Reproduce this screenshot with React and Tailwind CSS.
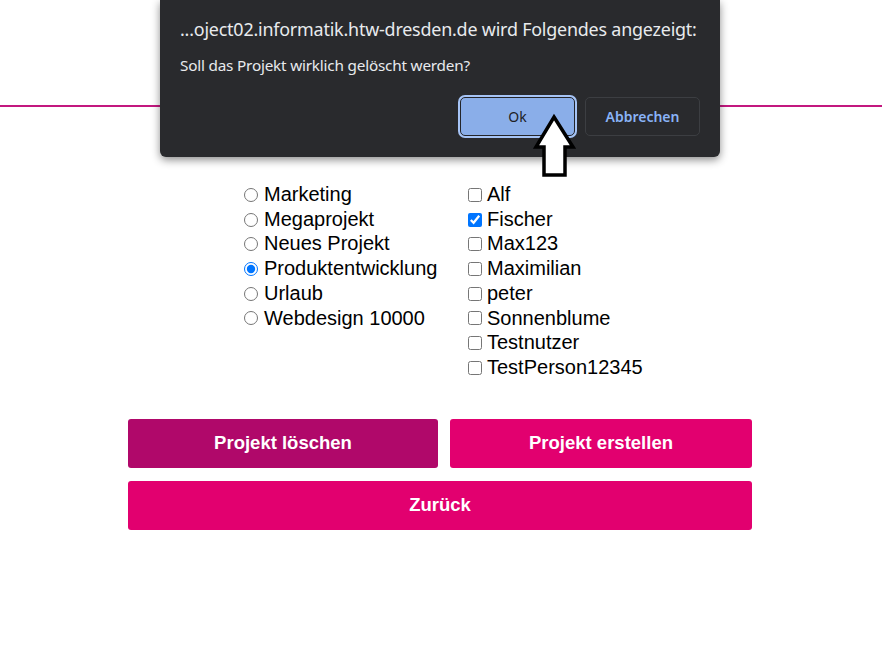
import { useState } from "react";

const projects = ["Marketing", "Megaprojekt", "Neues Projekt", "Produktentwicklung", "Urlaub", "Webdesign 10000"];
const users = ["Alf", "Fischer", "Max123", "Maximilian", "peter", "Sonnenblume", "Testnutzer", "TestPerson12345"];

function ConfirmDialog() {
  return (
    <div className="absolute left-[160px] top-0 w-[560px] h-[157px] bg-[#292a2d] rounded-b-[6px] shadow-[0_3px_8px_rgba(0,0,0,0.45)] px-5 font-['Noto_Sans',sans-serif]">
      <div className="pt-[15px] text-[17.9px] leading-[28px] text-[#e8eaed] tracking-[-0.2px]">
        ...oject02.informatik.htw-dresden.de wird Folgendes angezeigt:
      </div>
      <div className="mt-[12px] text-[15.3px] leading-[20px] text-[#e8eaed] tracking-[-0.2px]">
        Soll das Projekt wirklich gelöscht werden?
      </div>
      <div className="mt-[22px] flex justify-end gap-[10px]">
        <button className="w-[115px] h-[39px] rounded-[5px] bg-[#8aaee9] border border-[#23252a] ring-2 ring-[#a6c4f6] text-[14px] text-[#202124]">
          Ok
        </button>
        <button className="w-[115px] h-[39px] rounded-[5px] border border-[#3c3e42] text-[14px] font-semibold text-[#8ab4f8]">
          Abbrechen
        </button>
      </div>
    </div>
  );
}

function Arrow() {
  return (
    <svg className="absolute left-[532px] top-[113px]" width="46" height="66" viewBox="0 0 46 66">
      <polygon points="22,4 41,34 33,34 33,62 12,62 12,34 4,34" fill="white" stroke="black" strokeWidth="3.5" strokeLinejoin="miter" />
    </svg>
  );
}

export default function App() {
  const [project, setProject] = useState("Produktentwicklung");
  const [members, setMembers] = useState(["Fischer"]);

  const toggle = (u) =>
    setMembers(members.includes(u) ? members.filter((m) => m !== u) : [...members, u]);

  return (
    <div className="relative w-[882px] h-[647px] bg-white overflow-hidden font-['Liberation_Sans',Arial,sans-serif] text-black">
      {/* HEADER */}
      <div className="h-[107px] border-b-2 border-[#c3187f]" />

      <div className="w-[624px] mx-auto -translate-x-[1px]">
        <div className="pl-[117px] pt-[25px] text-[22px] font-bold leading-[26px]">Projekt bearbeiten</div>

        {/* LISTS */}
        <div className="pl-[116px] pt-[24px] flex text-[20px] leading-[24.7px]">
          <div className="w-[224px]">
            {projects.map((p) => (
              <label key={p} className="flex items-center gap-[6px]">
                <input
                  type="radio" name="project" checked={project === p}
                  onChange={() => setProject(p)}
                  className="w-[14px] h-[14px] m-0 mt-[1px]"
                />
                <span>{p}</span>
              </label>
            ))}
          </div>
          <div>
            {users.map((u) => (
              <label key={u} className="flex items-center gap-[5px]">
                <input
                  type="checkbox" checked={members.includes(u)}
                  onChange={() => toggle(u)}
                  className="w-[14px] h-[14px] m-0 mt-[1px]"
                />
                <span>{u}</span>
              </label>
            ))}
          </div>
        </div>

        {/* ACTIONS */}
        <div className="mt-[39px] flex flex-col gap-[13px]">
          <div className="flex gap-[12px]">
            <button className="w-[310px] h-[49px] rounded-[3px] bg-[#b0086a] text-white text-[18.5px] font-bold">
              Projekt löschen
            </button>
            <button className="flex-1 h-[49px] rounded-[3px] bg-[#e2006f] text-white text-[18.5px] font-bold">
              Projekt erstellen
            </button>
          </div>
          <button className="w-full h-[49px] rounded-[3px] bg-[#e2006f] text-white text-[18.5px] font-bold">
            Zurück
          </button>
        </div>
      </div>

      <ConfirmDialog />
      <Arrow />
    </div>
  );
}
